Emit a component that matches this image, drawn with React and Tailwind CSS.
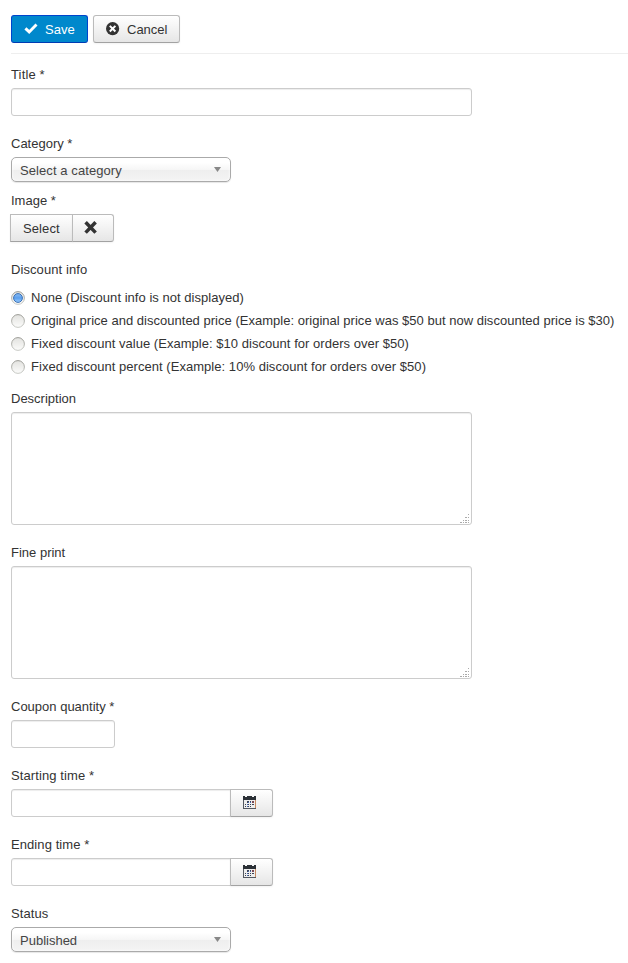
import React from "react";

const BTN =
  "box-border flex h-7 items-center border border-[#bbb] border-b-[#a2a2a2] bg-gradient-to-b from-white to-[#e6e6e6] shadow-[inset_0_1px_0_rgba(255,255,255,.2),0_1px_2px_rgba(0,0,0,.05)]";
const INPUT =
  "block h-7 border border-[#ccc] bg-white px-1.5 outline-none shadow-[inset_0_1px_1px_rgba(0,0,0,.075)]";

function Field({ label, className = "", labelClass = "", children }) {
  return (
    <div className={className}>
      <div className={"mb-1 h-[18px] " + labelClass}>{label}</div>
      {children}
    </div>
  );
}

function Select({ value, textClass = "" }) {
  return (
    <div className="flex h-[25px] w-[220px] items-center justify-between rounded-[5px] border border-[#aaa] bg-[linear-gradient(to_bottom,#fff_20%,#f6f6f6_50%,#eee_52%,#f4f4f4_100%)] pr-[9px] pl-2 text-[#444] shadow-[inset_0_0_3px_#fff,0_1px_1px_rgba(0,0,0,.1)]">
      <span className={"pt-[3px] " + textClass}>{value}</span>
      <svg width="7" height="5" viewBox="0 0 7 5">
        <path d="M0 0h7L3.5 5z" fill="#888" />
      </svg>
    </div>
  );
}

function Radio({ checked, textClass, children }) {
  return (
    <label className="mb-[5px] flex h-[18px] items-center whitespace-nowrap">
      <svg width="14" height="14" viewBox="0 0 14 14" className="mr-[6px] shrink-0">
        <defs>
          <linearGradient id="ring" x2="0" y2="1">
            <stop stopColor="#90908a" />
            <stop offset="1" stopColor="#c3c5c0" />
          </linearGradient>
          <linearGradient id="face" x2="0" y2="1">
            <stop stopColor="#e2e2df" />
            <stop offset="1" stopColor="#fcfcfb" />
          </linearGradient>
          <linearGradient id="dot" x2="0" y2="1">
            <stop stopColor="#8abcf2" />
            <stop offset="0.5" stopColor="#5a9fee" />
            <stop offset="1" stopColor="#9bcdff" />
          </linearGradient>
        </defs>
        <circle cx="7" cy="7" r="6.4" fill="url(#face)" stroke="url(#ring)" strokeWidth=".9" />
        {checked && <circle cx="7" cy="7" r="4.4" fill="url(#dot)" stroke="#3a70b5" strokeWidth="1" />}
      </svg>
      <span className={textClass}>{children}</span>
    </label>
  );
}

function TextArea() {
  return (
    <div className="flex h-[113px] w-[461px] items-end justify-end rounded-[3px] border border-[#ccc] bg-white shadow-[inset_0_1px_1px_rgba(0,0,0,.075)]">
      <svg width="11" height="11" viewBox="0 0 11 11" shapeRendering="crispEdges">
        <path
          fill="#aaa"
          d="M8 1h1v1H8zM8 4h1v1H8zM5 4h2v1H5zM8 7h1v1H8zM5 7h2v1H5zM3 7h1v1H3zM8 9h1v1H8zM5 9h2v1H5zM3 9h1v1H3zM0 9h2v1H0z"
        />
      </svg>
    </div>
  );
}

function CalendarIcon() {
  return (
    <svg width="13" height="13" viewBox="0 0 13 13" shapeRendering="crispEdges">
      <path fill="#545961" d="M0 3h13v10H0z" />
      <path fill="#eeeeee" d="M1 4h11v8H1z" />
      <path fill="#2b3036" d="M0 0h2v1h2V0h5v1h2V0h2v4H0z" />
      <path fill="#c98b62" d="M12 4h1v8h-1z" />
      <path
        fill="#3c4455"
        d="M4 5h2v2H4zM7 5h1v2H7zM2 8h1v1H2zM4 8h2v1H4zM7 8h1v1H7zM9 8h2v1H9zM2 10h1v1H2zM4 10h2v1H4zM7 10h1v1H7z"
      />
      <path fill="#4267b3" d="M5 6h1v1H5zM7 6h1v1H7zM4 8h1v1H4zM4 10h1v1H4z" />
      <path fill="#7b4a55" d="M9 5h2v2H9z" />
    </svg>
  );
}

function DateInput() {
  return (
    <div className="flex">
      <input className={INPUT + " w-[220px] rounded-l-[3px]"} />
      <button className={BTN + " -ml-px w-[43px] rounded-r-[3px] pb-px pl-3"}>
        <CalendarIcon />
      </button>
    </div>
  );
}

export default function App() {
  return (
    <div className="h-[963px] overflow-hidden bg-white pt-[15px] pl-[11px] font-['Liberation_Sans',Arial,sans-serif] text-[13px] leading-[18px] text-[#333]">
      <div className="flex gap-[5px]">
        <button className="flex h-7 w-[77px] items-center rounded-[3px] border border-[#0044cc] border-b-[#003bb3] bg-[#0088cc] pl-3 text-white">
          <svg width="14" height="12" viewBox="0 0 14 12" className="mr-[7px]">
            <path d="M1.4 5.4 5.2 8.9 12.5 1.5" fill="none" stroke="#fff" strokeWidth="2.9" />
          </svg>
          <span className="pt-px">Save</span>
        </button>
        <button className={BTN + " w-[87px] rounded-[3px] pl-3"}>
          <svg width="14" height="14" viewBox="0 0 14 14" className="mr-[7px]">
            <circle cx="6.6" cy="6.7" r="6.6" fill="#333" />
            <path d="m3.8 3.9 5.6 5.6m0-5.6-5.6 5.6" stroke="#fff" strokeWidth="2" />
          </svg>
          <span className="pt-px">Cancel</span>
        </button>
      </div>
      <div className="mt-[10px] mb-3 h-px bg-[#eee]" />

      <Field label="Title *" className="mb-[19px]" labelClass="tracking-[.14px]">
        <input className={INPUT + " w-[461px] rounded-[3px]"} />
      </Field>
      <Field label="Category *" className="mb-[10px]">
        <Select value="Select a category" textClass="tracking-[.08px]" />
      </Field>
      <Field label="Image *" className="mb-[19px]">
        <div className="-ml-px flex">
          <button className={BTN + " w-[63px] pl-3"}>
            <span className="pt-px tracking-[.1px]">Select</span>
          </button>
          <button className={BTN + " -ml-px w-[42px] rounded-r-[3px] pl-[11px]"}>
            <svg width="14" height="14" viewBox="0 0 14 14">
              <path d="m1.6 1.2 10 10.4m0-10.4L1.6 11.6" stroke="#333" strokeWidth="3.5" />
            </svg>
          </button>
        </div>
      </Field>

      <div className="mb-[10px] h-[18px] tracking-[.08px]">Discount info</div>
      <div className="mb-[9px] flow-root">
        <Radio checked textClass="tracking-[.03px]">None (Discount info is not displayed)</Radio>
        <Radio textClass="tracking-[.017px]">Original price and discounted price (Example: original price was $50 but now discounted price is $30)</Radio>
        <Radio textClass="tracking-[.035px]">Fixed discount value (Example: $10 discount for orders over $50)</Radio>
        <Radio textClass="tracking-[.04px]">Fixed discount percent (Example: 10% discount for orders over $50)</Radio>
      </div>

      <Field label="Description" className="mb-[19px]">
        <TextArea />
      </Field>
      <Field label="Fine print" className="mb-[19px]">
        <TextArea />
      </Field>
      <Field label="Coupon quantity *" className="mb-[19px]">
        <input className={INPUT + " w-[104px] rounded-[3px]"} />
      </Field>
      <Field label="Starting time *" className="mb-[19px]" labelClass="tracking-[.1px]">
        <DateInput />
      </Field>
      <Field label="Ending time *" className="mb-[19px]" labelClass="tracking-[.08px]">
        <DateInput />
      </Field>
      <Field label="Status" labelClass="tracking-[.1px]">
        <Select value="Published" />
      </Field>
    </div>
  );
}
